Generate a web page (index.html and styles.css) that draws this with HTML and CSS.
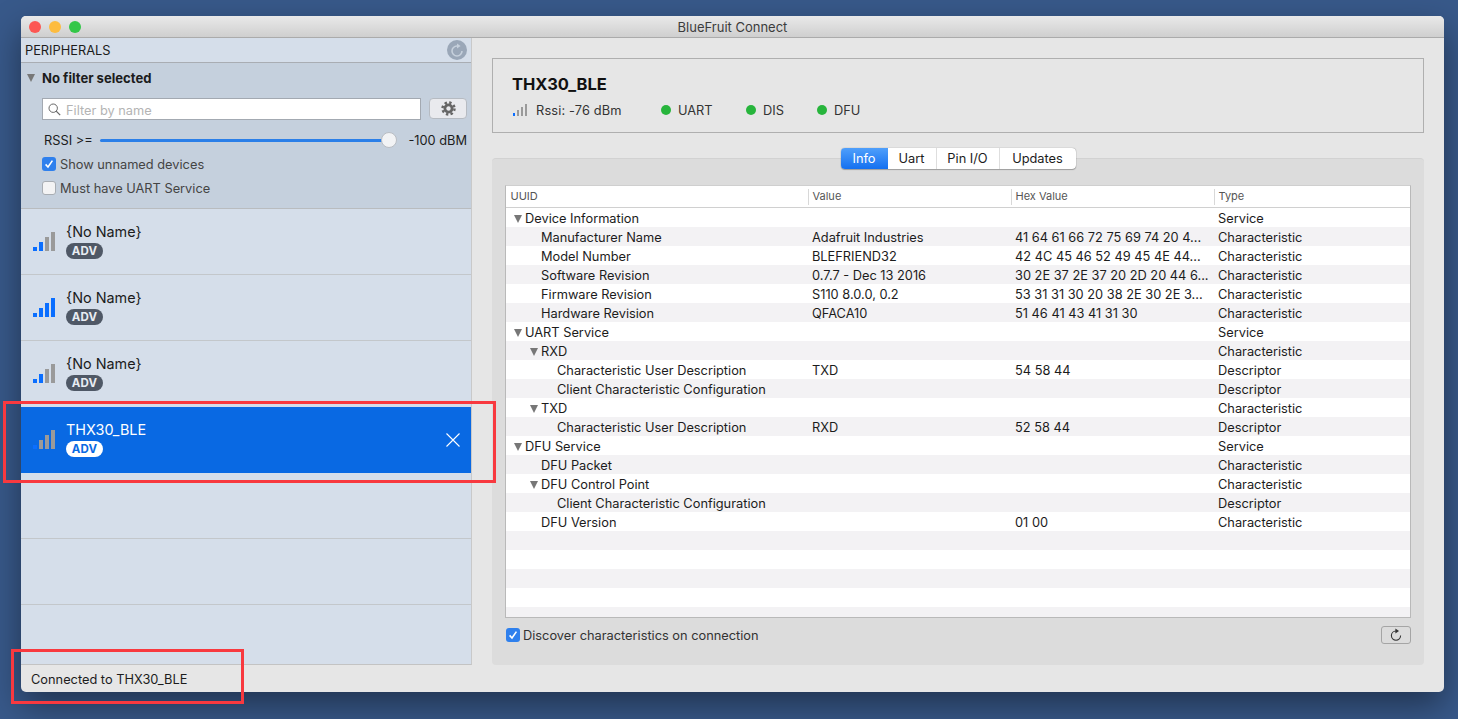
FILE: index.html
```html
<!DOCTYPE html>
<html lang="en">
<head>
  <meta charset="UTF-8" />
  <title>BlueFruit Connect</title>
  <link rel="stylesheet" href="styles.css">
</head>
<body>
  <div class="window">
    <div class="titlebar">
      <div class="lights">
        <span class="light red"></span>
        <span class="light yellow"></span>
        <span class="light green"></span>
      </div>
      <span class="title">BlueFruit Connect</span>
    </div>

    <div class="panes">
      <aside class="sidebar">
        <div class="side-head">
          <span>PERIPHERALS</span>
          <svg class="scan-icon" width="20" height="20" viewBox="0 0 20 20">
            <circle cx="10" cy="10" r="10" fill="#9aa7b8"/>
            <path d="M10 6 A5 5 0 1 0 15 11" fill="none" stroke="#c6d0dc" stroke-width="1.6"/>
            <path d="M10 3.4 L13.6 6 L10 8.6 Z" fill="#c6d0dc"/>
          </svg>
        </div>

        <div class="filters">
          <div class="filter-title"><span class="twist-down"></span>No filter selected</div>
          <div class="search-row">
            <div class="search">
              <svg width="13" height="13" viewBox="0 0 13 13">
                <circle cx="5.2" cy="5.2" r="4.2" fill="none" stroke="#666" stroke-width="1"/>
                <path d="M8.2 8.2 L12.2 12.2" stroke="#666" stroke-width="1.2"/>
              </svg>
              <span class="placeholder">Filter by name</span>
            </div>
            <div class="gear-btn">
              <svg width="15" height="15" viewBox="0 0 15 15">
                <circle cx="7.5" cy="7.5" r="3.6" fill="none" stroke="#666" stroke-width="2.8"/>
                <circle cx="7.5" cy="7.5" r="6" fill="none" stroke="#666" stroke-width="2.4" stroke-dasharray="2.4 2.31"/>
              </svg>
            </div>
          </div>
          <div class="rssi-row">
            <span class="rssi-label">RSSI &gt;=</span>
            <div class="slider"><div class="track"></div><div class="knob"></div></div>
            <span class="rssi-value">-100 dBM</span>
          </div>
          <label class="check-row">
            <span class="check on"><svg width="14" height="14" viewBox="0 0 14 14"><path d="M3.6 7.4 L6 10 L10.4 3.6" fill="none" stroke="#fff" stroke-width="1.6"/></svg></span>
            Show unnamed devices
          </label>
          <label class="check-row">
            <span class="check"></span>
            Must have UART Service
          </label>
        </div>

        <div class="device-list">
          <div class="device">
            <div class="signal"><i class="b1"></i><i class="b2"></i><i class="b3 off"></i><i class="b4 off"></i></div>
            <div class="device-text"><div class="device-name">{No Name}</div><span class="badge">ADV</span></div>
          </div>
          <div class="device">
            <div class="signal"><i class="b1"></i><i class="b2"></i><i class="b3"></i><i class="b4"></i></div>
            <div class="device-text"><div class="device-name">{No Name}</div><span class="badge">ADV</span></div>
          </div>
          <div class="device before-selected">
            <div class="signal"><i class="b1"></i><i class="b2"></i><i class="b3 off"></i><i class="b4 off"></i></div>
            <div class="device-text"><div class="device-name">{No Name}</div><span class="badge">ADV</span></div>
          </div>
          <div class="device selected">
            <div class="signal"><i class="b1"></i><i class="b2 off"></i><i class="b3 off"></i><i class="b4 off"></i></div>
            <div class="device-text"><div class="device-name">THX30_BLE</div><span class="badge">ADV</span></div>
            <svg class="close-icon" width="14" height="14" viewBox="0 0 14 14">
              <path d="M0.5 0.5 L13.5 13.5 M13.5 0.5 L0.5 13.5" stroke="#fff" stroke-width="1.1"/>
            </svg>
          </div>
          <div class="device"></div>
          <div class="device"></div>
        </div>
      </aside>

      <main class="detail">
        <section class="info-box">
          <h2>THX30_BLE</h2>
          <div class="info-row">
            <div class="signal small"><i class="b1"></i><i class="b2 off"></i><i class="b3 off"></i><i class="b4 off"></i></div>
            <span class="rssi-text">Rssi: -76 dBm</span>
            <span class="service uart"><i class="dot"></i>UART</span>
            <span class="service dis"><i class="dot"></i>DIS</span>
            <span class="service dfu"><i class="dot"></i>DFU</span>
          </div>
        </section>

        <section class="group">
          <div class="tabs">
            <span class="tab tab-info active">Info</span>
            <span class="tab tab-uart">Uart</span>
            <span class="tab tab-pin">Pin I/O</span>
            <span class="tab tab-updates">Updates</span>
          </div>

          <div class="table-box">
            <table class="gatt">
              <colgroup><col class="c1"><col class="c2"><col class="c3"><col class="c4"></colgroup>
              <thead>
                <tr><th>UUID</th><th>Value</th><th>Hex Value</th><th>Type</th></tr>
              </thead>
              <tbody>
                <tr><td class="l0 open">Device Information</td><td></td><td></td><td>Service</td></tr>
                <tr><td class="l1">Manufacturer Name</td><td>Adafruit Industries</td><td>41 64 61 66 72 75 69 74 20 4...</td><td>Characteristic</td></tr>
                <tr><td class="l1">Model Number</td><td>BLEFRIEND32</td><td>42 4C 45 46 52 49 45 4E 44...</td><td>Characteristic</td></tr>
                <tr><td class="l1">Software Revision</td><td>0.7.7 - Dec 13 2016</td><td>30 2E 37 2E 37 20 2D 20 44 6...</td><td>Characteristic</td></tr>
                <tr><td class="l1">Firmware Revision</td><td>S110 8.0.0, 0.2</td><td>53 31 31 30 20 38 2E 30 2E 3...</td><td>Characteristic</td></tr>
                <tr><td class="l1">Hardware Revision</td><td>QFACA10</td><td>51 46 41 43 41 31 30</td><td>Characteristic</td></tr>
                <tr><td class="l0 open">UART Service</td><td></td><td></td><td>Service</td></tr>
                <tr><td class="l1 open">RXD</td><td></td><td></td><td>Characteristic</td></tr>
                <tr><td class="l2">Characteristic User Description</td><td>TXD</td><td>54 58 44</td><td>Descriptor</td></tr>
                <tr><td class="l2">Client Characteristic Configuration</td><td></td><td></td><td>Descriptor</td></tr>
                <tr><td class="l1 open">TXD</td><td></td><td></td><td>Characteristic</td></tr>
                <tr><td class="l2">Characteristic User Description</td><td>RXD</td><td>52 58 44</td><td>Descriptor</td></tr>
                <tr><td class="l0 open">DFU Service</td><td></td><td></td><td>Service</td></tr>
                <tr><td class="l1">DFU Packet</td><td></td><td></td><td>Characteristic</td></tr>
                <tr><td class="l1 open">DFU Control Point</td><td></td><td></td><td>Characteristic</td></tr>
                <tr><td class="l2">Client Characteristic Configuration</td><td></td><td></td><td>Descriptor</td></tr>
                <tr><td class="l1">DFU Version</td><td></td><td>01 00</td><td>Characteristic</td></tr>
                <tr><td></td><td></td><td></td><td></td></tr>
                <tr><td></td><td></td><td></td><td></td></tr>
                <tr><td></td><td></td><td></td><td></td></tr>
                <tr><td></td><td></td><td></td><td></td></tr>
                <tr><td></td><td></td><td></td><td></td></tr>
              </tbody>
            </table>
          </div>

          <div class="group-foot">
            <label class="discover">
              <span class="check on"><svg width="14" height="14" viewBox="0 0 14 14"><path d="M3.6 7.4 L6 10 L10.4 3.6" fill="none" stroke="#fff" stroke-width="1.6"/></svg></span>
              Discover characteristics on connection
            </label>
            <div class="refresh-btn">
              <svg width="14" height="14" viewBox="0 0 14 14">
                <path d="M7 3 A4.6 4.6 0 1 0 11.6 7.6" fill="none" stroke="#333" stroke-width="1.1"/>
                <path d="M6.4 0.4 L10 3 L6.4 5.6 Z" fill="#333"/>
              </svg>
            </div>
          </div>
        </section>
      </main>
    </div>

    <div class="status">Connected to THX30_BLE</div>
  </div>

  <!-- red marks drawn on top of the screenshot -->
  <div class="mark mark-row"></div>
  <div class="mark mark-status"></div>
</body>
</html>
```

FILE: styles.css
```css
html, body {
  margin: 0;
  padding: 0;
  height: 719px;
  overflow: hidden;
}
body {
  position: relative;
  box-sizing: border-box;
  padding: 16px 0 0 21px;
  background: #38598a;
  font-family: Inter, "Liberation Sans", sans-serif;
  font-size: 12.8px;
  color: #1c1c1c;
}
.window {
  width: 1423px;
  height: 676px;
  display: flex;
  flex-direction: column;
  background: #e6e6e6;
  border-radius: 5px;
  box-shadow: 0 14px 34px rgba(0, 0, 0, 0.42);
  overflow: hidden;
}

/* title bar */
.titlebar {
  position: relative;
  flex: none;
  height: 21px;
  display: flex;
  align-items: center;
  justify-content: center;
  background: linear-gradient(#e9e9e9, #cfcfcf);
  border-bottom: 1px solid #ababab;
}
.lights {
  position: absolute;
  left: 8px;
  top: 5px;
  display: flex;
  gap: 8px;
}
.light {
  width: 12px;
  height: 12px;
  border-radius: 50%;
}
.red { background: #fc5753; }
.yellow { background: #fdbc40; }
.green { background: #33c748; }
.title {
  color: #3c3c3c;
  font-size: 13px;
  padding-top: 1px;
}

.panes {
  flex: 1;
  display: flex;
  min-height: 0;
}

/* sidebar */
.sidebar {
  flex: none;
  width: 450px;
  display: flex;
  flex-direction: column;
  background: #d5deea;
  border-right: 1px solid #c9c9c9;
  border-bottom: 1px solid #c3c3c3;
}
.side-head {
  flex: none;
  height: 24px;
  display: flex;
  align-items: center;
  justify-content: space-between;
  padding: 0 4px;
  border-bottom: 1px solid #a9adb3;
  font-size: 12.8px;
}
.filters {
  flex: none;
  height: 139px;
  padding: 6px 4px 0 21px;
  background: #c5d0dd;
  border-bottom: 1px solid #b9bcbf;
}
.filter-title {
  display: flex;
  align-items: center;
  height: 18px;
  margin-left: -15px;
  font-weight: 700;
  font-size: 13.1px;
}
.twist-down {
  width: 0;
  height: 0;
  margin-right: 7px;
  border-left: 4.5px solid transparent;
  border-right: 4.5px solid transparent;
  border-top: 8px solid #777;
}
.search-row {
  display: flex;
  gap: 8px;
  margin-top: 11px;
}
.search {
  flex: 1;
  box-sizing: border-box;
  height: 22px;
  display: flex;
  align-items: center;
  gap: 5px;
  padding-left: 5px;
  background: #fff;
  border: 1px solid #a3a9b1;
}
.placeholder {
  color: #b4b4b4;
  padding-top: 2px;
}
.gear-btn {
  box-sizing: border-box;
  width: 38px;
  height: 21px;
  display: flex;
  align-items: center;
  justify-content: center;
  background: #e9eaee;
  border: 1px solid #b6bbc2;
  border-radius: 4px;
}
.rssi-row {
  display: flex;
  align-items: center;
  height: 18px;
  margin-top: 11px;
  padding-left: 2px;
}
.rssi-label {
  width: 56px;
}
.slider {
  position: relative;
  width: 297px;
  height: 16px;
  margin-top: -1px;
}
.track {
  position: absolute;
  left: 0;
  right: 14px;
  top: 7px;
  height: 3px;
  background: #2b7fe8;
  border-radius: 2px;
}
.knob {
  position: absolute;
  right: 0;
  top: 0;
  box-sizing: border-box;
  width: 16px;
  height: 16px;
  background: #f2f3f5;
  border: 1px solid #b9bdc3;
  border-radius: 50%;
}
.rssi-value {
  margin-left: auto;
}
.check-row {
  display: flex;
  align-items: center;
  gap: 4px;
  height: 18px;
  margin-top: 6px;
  color: #444;
}
.check {
  box-sizing: border-box;
  width: 14px;
  height: 14px;
  display: block;
  background: #f3f3f4;
  border: 1px solid #a8adb3;
  border-radius: 3px;
}
.check svg {
  display: block;
}
.check.on {
  background: #2f80ed;
  border: none;
}

/* device rows */
.device-list {
  flex: 1;
  min-height: 0;
  overflow: hidden;
}
.device {
  box-sizing: border-box;
  height: 66px;
  display: flex;
  align-items: center;
  padding: 0 11px 0 12px;
  border-bottom: 1px solid #c3c7cb;
}
.before-selected {
  border-bottom-color: #d5deea;
}
.signal {
  display: flex;
  align-items: flex-end;
  gap: 2px;
}
.signal i {
  display: block;
  width: 4px;
  background: #0a6eff;
}
.signal .off {
  background: #9a9a9a;
}
.b1 { height: 4px; }
.b2 { height: 9px; }
.b3 { height: 14px; }
.b4 { height: 19px; }
.signal.small i { width: 2px; }
.signal.small .b1 { height: 3px; }
.signal.small .b2 { height: 6px; }
.signal.small .b3 { height: 9px; }
.signal.small .b4 { height: 12px; }
.device-text {
  margin: -2px 0 0 11px;
}
.device-name {
  height: 18px;
  line-height: 18px;
  font-size: 14.4px;
  margin-bottom: 2px;
}
.badge {
  display: block;
  width: 37px;
  height: 16px;
  line-height: 16px;
  text-align: center;
  background: #4f5866;
  color: #e8ecf2;
  border-radius: 8px;
  font-size: 11.5px;
  font-weight: 700;
  letter-spacing: 0.2px;
}
.device.selected {
  background: #0969e3;
  border-bottom-color: #0969e3;
  color: #fff;
}
.selected .b1 {
  background: #0a6eff;
}
.selected .badge {
  background: #fff;
  color: #0969e3;
}
.close-icon {
  margin-left: auto;
}

/* right side */
.detail {
  flex: 1;
  min-width: 0;
  display: flex;
  flex-direction: column;
  padding: 20px 20px 0;
}
.info-box {
  flex: none;
  box-sizing: border-box;
  height: 75px;
  padding: 15px 20px 0;
  border: 1px solid #afafaf;
}
.info-box h2 {
  margin: 0 0 0 -1px;
  height: 20px;
  line-height: 20px;
  font-size: 16.5px;
  font-weight: 700;
  color: #111;
}
.info-row {
  display: flex;
  align-items: center;
  height: 16px;
  margin-top: 8px;
  color: #333;
}
.rssi-text {
  margin-left: 9px;
  width: 125px;
  letter-spacing: 0.15px;
}
.service {
  display: flex;
  align-items: center;
}
.service .dot {
  width: 10px;
  height: 10px;
  margin-right: 7px;
  background: #27b53c;
  border-radius: 50%;
}
.uart { width: 85px; }
.dis { width: 71px; }
.group {
  flex: 1;
  min-height: 0;
  margin-top: 25px;
  padding: 0 13px;
  background: #dcdcdc;
  border-top: 1px solid #d2d2d2;
  border-radius: 4px;
}
.tabs {
  width: 235px;
  height: 21px;
  margin: -11px auto 0;
  display: flex;
  background: #fff;
  border-radius: 4px;
  box-shadow: 0 0 1px rgba(0, 0, 0, 0.5), 0 1px 1px rgba(0, 0, 0, 0.25);
}
.tab {
  display: flex;
  align-items: center;
  justify-content: center;
  border-right: 1px solid #dedede;
  box-sizing: border-box;
}
.tab.active {
  background: linear-gradient(#4f9ffb, #1470f0);
  color: #fff;
  border-right: none;
  border-radius: 4px 0 0 4px;
}
.tab-info { width: 47px; }
.tab-uart { width: 49px; }
.tab-pin { width: 63px; }
.tab-updates { flex: 1; border-right: none; }

.table-box {
  box-sizing: border-box;
  height: 433px;
  margin-top: 16px;
  background: #fff;
  border: 1px solid #b9b9b9;
  border-top-color: #cfcfcf;
  overflow: hidden;
}
.gatt {
  width: 904px;
  table-layout: fixed;
  border-collapse: collapse;
}
.c1 { width: 302px; }
.c2 { width: 203px; }
.c3 { width: 203px; }
.gatt th {
  height: 19px;
  padding: 0 0 2px 4.5px;
  text-align: left;
  font-size: 11px;
  font-weight: 400;
  color: #555;
  border-bottom: 1px solid #d0d0d0;
  background: linear-gradient(to right, #d8d8d8 1px, #fff 1px) left center / 100% 16px no-repeat #fff;
}
.gatt th:first-child {
  background: #fff;
}
.gatt td {
  height: 18px;
  padding: 1px 0 0 4px;
  white-space: nowrap;
  overflow: hidden;
}
.gatt tbody tr:nth-child(even) {
  background: #f3f2f4;
}
.gatt td.l0 { padding-left: 19px; }
.gatt td.l1 { padding-left: 35px; }
.gatt td.l2 { padding-left: 51px; }
.open::before {
  content: "";
  display: inline-block;
  width: 0;
  height: 0;
  margin-left: -11px;
  margin-right: 3px;
  border-left: 4.5px solid transparent;
  border-right: 4.5px solid transparent;
  border-top: 8px solid #777;
}
.group-foot {
  display: flex;
  align-items: center;
  justify-content: space-between;
  margin-top: 8px;
}
.discover {
  display: flex;
  align-items: center;
  gap: 3px;
  margin-left: 1px;
  color: #333;
}
.refresh-btn {
  box-sizing: border-box;
  width: 30px;
  height: 18px;
  display: flex;
  align-items: center;
  justify-content: center;
  border: 1px solid #a5a5a5;
  border-radius: 3px;
}

.status {
  flex: none;
  height: 27px;
  line-height: 29px;
  padding-left: 10px;
  box-sizing: border-box;
  font-size: 12.8px;
}

/* annotations */
.mark {
  position: absolute;
  box-sizing: border-box;
  border: 3px solid #f8393f;
}
.mark-row {
  left: 3px;
  top: 401px;
  width: 493px;
  height: 82px;
}
.mark-status {
  left: 11px;
  top: 649px;
  width: 233px;
  height: 55px;
}
```
